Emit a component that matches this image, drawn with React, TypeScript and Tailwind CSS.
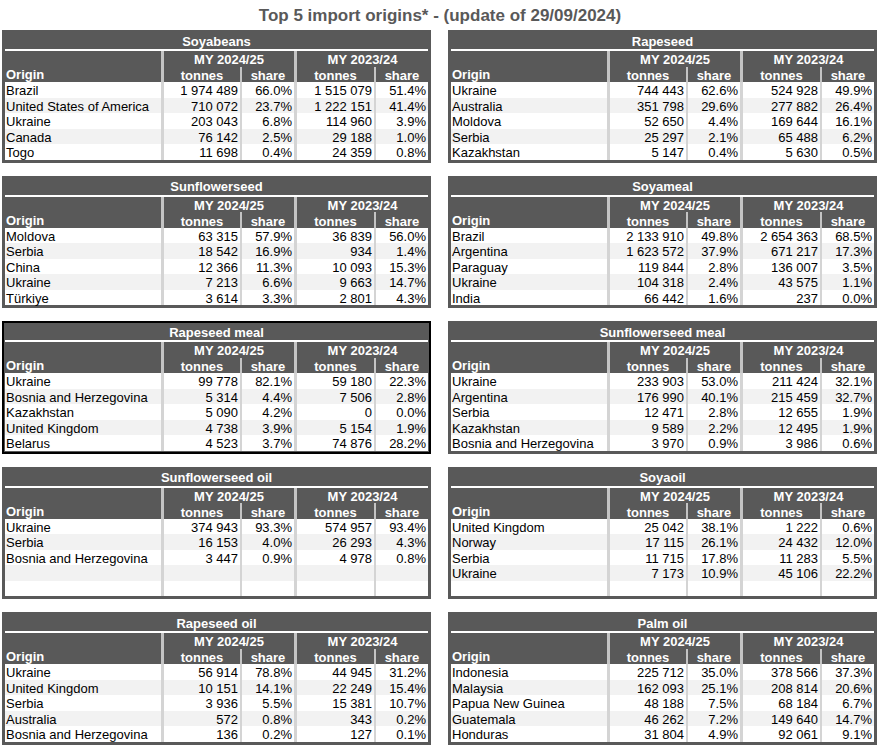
import React from "react";

type Row = [string, string, string, string, string] | null;
type Table = { title: string; rows: Row[]; black?: boolean };

const tables: Table[] = [
  {
    title: "Soyabeans",
    rows: [
      ["Brazil", "1 974 489", "66.0%", "1 515 079", "51.4%"],
      ["United States of America", "710 072", "23.7%", "1 222 151", "41.4%"],
      ["Ukraine", "203 043", "6.8%", "114 960", "3.9%"],
      ["Canada", "76 142", "2.5%", "29 188", "1.0%"],
      ["Togo", "11 698", "0.4%", "24 359", "0.8%"],
    ],
  },
  {
    title: "Rapeseed",
    rows: [
      ["Ukraine", "744 443", "62.6%", "524 928", "49.9%"],
      ["Australia", "351 798", "29.6%", "277 882", "26.4%"],
      ["Moldova", "52 650", "4.4%", "169 644", "16.1%"],
      ["Serbia", "25 297", "2.1%", "65 488", "6.2%"],
      ["Kazakhstan", "5 147", "0.4%", "5 630", "0.5%"],
    ],
  },
  {
    title: "Sunflowerseed",
    rows: [
      ["Moldova", "63 315", "57.9%", "36 839", "56.0%"],
      ["Serbia", "18 542", "16.9%", "934", "1.4%"],
      ["China", "12 366", "11.3%", "10 093", "15.3%"],
      ["Ukraine", "7 213", "6.6%", "9 663", "14.7%"],
      ["Türkiye", "3 614", "3.3%", "2 801", "4.3%"],
    ],
  },
  {
    title: "Soyameal",
    rows: [
      ["Brazil", "2 133 910", "49.8%", "2 654 363", "68.5%"],
      ["Argentina", "1 623 572", "37.9%", "671 217", "17.3%"],
      ["Paraguay", "119 844", "2.8%", "136 007", "3.5%"],
      ["Ukraine", "104 318", "2.4%", "43 575", "1.1%"],
      ["India", "66 442", "1.6%", "237", "0.0%"],
    ],
  },
  {
    title: "Rapeseed meal",
    black: true,
    rows: [
      ["Ukraine", "99 778", "82.1%", "59 180", "22.3%"],
      ["Bosnia and Herzegovina", "5 314", "4.4%", "7 506", "2.8%"],
      ["Kazakhstan", "5 090", "4.2%", "0", "0.0%"],
      ["United Kingdom", "4 738", "3.9%", "5 154", "1.9%"],
      ["Belarus", "4 523", "3.7%", "74 876", "28.2%"],
    ],
  },
  {
    title: "Sunflowerseed meal",
    rows: [
      ["Ukraine", "233 903", "53.0%", "211 424", "32.1%"],
      ["Argentina", "176 990", "40.1%", "215 459", "32.7%"],
      ["Serbia", "12 471", "2.8%", "12 655", "1.9%"],
      ["Kazakhstan", "9 589", "2.2%", "12 495", "1.9%"],
      ["Bosnia and Herzegovina", "3 970", "0.9%", "3 986", "0.6%"],
    ],
  },
  {
    title: "Sunflowerseed oil",
    rows: [
      ["Ukraine", "374 943", "93.3%", "574 957", "93.4%"],
      ["Serbia", "16 153", "4.0%", "26 293", "4.3%"],
      ["Bosnia and Herzegovina", "3 447", "0.9%", "4 978", "0.8%"],
      null,
      null,
    ],
  },
  {
    title: "Soyaoil",
    rows: [
      ["United Kingdom", "25 042", "38.1%", "1 222", "0.6%"],
      ["Norway", "17 115", "26.1%", "24 432", "12.0%"],
      ["Serbia", "11 715", "17.8%", "11 283", "5.5%"],
      ["Ukraine", "7 173", "10.9%", "45 106", "22.2%"],
      null,
    ],
  },
  {
    title: "Rapeseed oil",
    rows: [
      ["Ukraine", "56 914", "78.8%", "44 945", "31.2%"],
      ["United Kingdom", "10 151", "14.1%", "22 249", "15.4%"],
      ["Serbia", "3 936", "5.5%", "15 381", "10.7%"],
      ["Australia", "572", "0.8%", "343", "0.2%"],
      ["Bosnia and Herzegovina", "136", "0.2%", "127", "0.1%"],
    ],
  },
  {
    title: "Palm oil",
    rows: [
      ["Indonesia", "225 712", "35.0%", "378 566", "37.3%"],
      ["Malaysia", "162 093", "25.1%", "208 814", "20.6%"],
      ["Papua New Guinea", "48 188", "7.5%", "68 184", "6.7%"],
      ["Guatemala", "46 262", "7.2%", "149 640", "14.7%"],
      ["Honduras", "31 804", "4.9%", "92 061", "9.1%"],
    ],
  },
];

const COLS = "grid grid-cols-[156px_79px_54px_80px_54px]";

function DataTable({ t }: { t: Table }) {
  return (
    <div
      className={
        "w-[429px] bg-[#595959] " +
        (t.black ? "border-2 border-black p-px" : "p-[3px]")
      }
    >
      <div className="h-[16px] flex items-center justify-center font-bold text-white leading-none">
        {t.title}
      </div>
      <div className="h-[2px] bg-white" />
      <div className={COLS + " grid-rows-[15.5px_15.5px] text-white font-bold leading-none"}>
        <div className="row-span-2 flex items-end pl-px pb-px">Origin</div>
        <div className="col-span-2 border-l-[3px] border-[#c4c4c4] flex items-center justify-center pt-[2px]">
          MY 2024/25
        </div>
        <div className="col-span-2 border-l-[3px] border-[#c4c4c4] flex items-center justify-center pt-[2px]">
          MY 2023/24
        </div>
        <div className="border-l-[3px] border-[#c4c4c4] flex items-center justify-center pt-[3px]">tonnes</div>
        <div className="border-l-[2px] border-[#c4c4c4] flex items-center justify-center pt-[3px]">share</div>
        <div className="border-l-[3px] border-[#c4c4c4] flex items-center justify-center pt-[3px]">tonnes</div>
        <div className="border-l-[2px] border-[#c4c4c4] flex items-center justify-center pt-[3px]">share</div>
      </div>
      {t.rows.map((r, i) => (
        <div
          key={i}
          className={
            COLS +
            " h-[15.5px] leading-none text-black " +
            (i % 2 === 1 ? "bg-[#f2f2f2]" : "bg-white")
          }
        >
          <div className="flex items-center pl-px pt-[2px] whitespace-nowrap">{r ? r[0] : ""}</div>
          <div className="border-l-[3px] border-[#d4d4d4] flex items-center justify-end pr-[2px] pt-[2px]">
            {r ? r[1] : ""}
          </div>
          <div className="border-l-[2px] border-[#d4d4d4] flex items-center justify-end pr-[2px] pt-[2px]">
            {r ? r[2] : ""}
          </div>
          <div className="border-l-[3px] border-[#d4d4d4] flex items-center justify-end pr-[2px] pt-[2px]">
            {r ? r[3] : ""}
          </div>
          <div className="border-l-[2px] border-[#d4d4d4] flex items-center justify-end pr-[2px] pt-[2px]">
            {r ? r[4] : ""}
          </div>
        </div>
      ))}
    </div>
  );
}

export default function App() {
  return (
    <div
      className="w-[880px] h-[752px] bg-white overflow-hidden text-[13px]"
      style={{ fontFamily: '"Liberation Sans", Arial, sans-serif' }}
    >
      <div className="h-[30px] flex items-center justify-center text-[17px] font-bold text-[#595959] pt-px">
        Top 5 import origins* - (update of 29/09/2024)
      </div>
      <div className="grid grid-cols-[429px_429px] gap-x-[17px] gap-y-[13px] pl-[2px]">
        {tables.map((t) => (
          <DataTable key={t.title} t={t} />
        ))}
      </div>
    </div>
  );
}
